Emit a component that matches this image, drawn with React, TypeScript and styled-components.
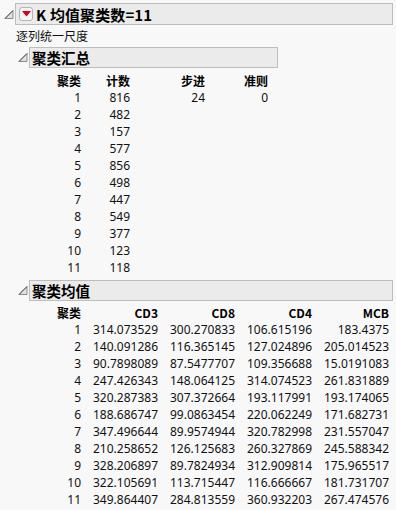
import React from "react";
import styled, { createGlobalStyle } from "styled-components";

const GlobalStyle = createGlobalStyle`
  html, body {
    margin: 0;
    padding: 0;
    background: #f8f8f8;
  }
  body {
    font-family: "Noto Sans", "Noto Sans CJK SC", sans-serif;
    font-size: 12px;
    color: #111;
  }
`;

const Page = styled.div`
  width: 396px;
  height: 510px;
  padding-top: 3px;
  box-sizing: border-box;
  overflow: hidden;
`;

const HeaderRow = styled.div`
  display: flex;
  align-items: stretch;
`;

const ToggleCell = styled.div<{ $w: number }>`
  width: ${(p) => p.$w}px;
  flex: none;
  display: flex;
  align-items: center;
  justify-content: flex-end;
  padding-right: 1px;
  box-sizing: border-box;
`;

const HeaderBox = styled.div<{ $big?: boolean; $w?: number }>`
  ${(p) => (p.$w ? `width: ${p.$w}px;` : "flex: 1;")}
  margin-right: ${(p) => (p.$w ? 0 : 3)}px;
  height: ${(p) => (p.$big ? 22 : 21)}px;
  box-sizing: border-box;
  border: 1px solid #bdbdbd;
  background: #ebebeb;
  display: flex;
  align-items: center;
  gap: 3px;
  padding-left: ${(p) => (p.$big ? 3 : 2)}px;
  font-family: "Noto Sans CJK SC", "Noto Sans", sans-serif;
  font-weight: 700;
  font-size: ${(p) => (p.$big ? 15 : 14.5)}px;
  color: #000;
  white-space: nowrap;
`;

const TitleText = styled.span`
  letter-spacing: 0.1px;
`;

const MenuButton = styled.span`
  width: 14px;
  height: 14px;
  box-sizing: border-box;
  border: 1px solid #b4b4b4;
  border-radius: 3px;
  background: #f4f4f4;
  display: inline-flex;
  align-items: center;
  justify-content: center;
  flex: none;
`;

const Content = styled.div<{ $indent: number }>`
  padding-left: ${(p) => p.$indent}px;
`;

const Note = styled.div`
  font-family: "Noto Sans CJK SC", sans-serif;
  font-size: 12px;
  height: 17px;
  line-height: 17px;
  margin-top: 2px;
  margin-bottom: 3px;
  color: #111;
`;

const Grid = styled.div<{ $cols: string; $top: number }>`
  display: grid;
  grid-template-columns: ${(p) => p.$cols};
  grid-auto-rows: 17px;
  margin: ${(p) => p.$top}px 0 4px 0;
`;

const Cell = styled.div<{ $head?: boolean }>`
  text-align: right;
  line-height: 17px;
  white-space: nowrap;
  font-weight: ${(p) => (p.$head ? 700 : 400)};
  font-family: ${(p) =>
    p.$head
      ? `"Noto Sans CJK SC", "Noto Sans", sans-serif`
      : `"Noto Sans", "Noto Sans CJK SC", sans-serif`};
  font-size: 12px;
  color: ${(p) => (p.$head ? "#000" : "#111")};
`;

const Disclosure = () => (
  <svg width="10" height="9" viewBox="0 0 10 9">
    <polygon points="9,0.5 9,8.5 1,8.5" fill="#e2e2e2" stroke="#8a8a8a" strokeWidth="1" />
    <line x1="9" y1="0.5" x2="1" y2="8.5" stroke="#555" strokeWidth="1" />
  </svg>
);

const RedTriangle = () => (
  <svg width="9" height="6" viewBox="0 0 9 6">
    <polygon points="0,0 9,0 4.5,5.5" fill="#d6001c" />
  </svg>
);

const summary: (string | number)[][] = [
  [1, 816, 24, 0],
  [2, 482, "", ""],
  [3, 157, "", ""],
  [4, 577, "", ""],
  [5, 856, "", ""],
  [6, 498, "", ""],
  [7, 447, "", ""],
  [8, 549, "", ""],
  [9, 377, "", ""],
  [10, 123, "", ""],
  [11, 118, "", ""],
];

const means: string[][] = [
  ["1", "314.073529", "300.270833", "106.615196", "183.4375"],
  ["2", "140.091286", "116.365145", "127.024896", "205.014523"],
  ["3", "90.7898089", "87.5477707", "109.356688", "15.0191083"],
  ["4", "247.426343", "148.064125", "314.074523", "261.831889"],
  ["5", "320.287383", "307.372664", "193.117991", "193.174065"],
  ["6", "188.686747", "99.0863454", "220.062249", "171.682731"],
  ["7", "347.496644", "89.9574944", "320.782998", "231.557047"],
  ["8", "210.258652", "126.125683", "260.327869", "245.588342"],
  ["9", "328.206897", "89.7824934", "312.909814", "175.965517"],
  ["10", "322.105691", "113.715447", "116.666667", "181.731707"],
  ["11", "349.864407", "284.813559", "360.932203", "267.474576"],
];

export default function App() {
  return (
    <>
      <GlobalStyle />
      <Page>
        <HeaderRow>
          <ToggleCell $w={15}>
            <Disclosure />
          </ToggleCell>
          <HeaderBox $big>
            <MenuButton>
              <RedTriangle />
            </MenuButton>
            <TitleText>K 均值聚类数=11</TitleText>
          </HeaderBox>
        </HeaderRow>
        <Content $indent={16}>
          <Note>逐列统一尺度</Note>
          <HeaderRow>
            <ToggleCell $w={13}>
              <Disclosure />
            </ToggleCell>
            <HeaderBox $w={249}>聚类汇总</HeaderBox>
          </HeaderRow>
          <Content $indent={13}>
            <Grid $cols="52px 49px 75px 63px" $top={4}>
              <Cell $head>聚类</Cell>
              <Cell $head>计数</Cell>
              <Cell $head>步进</Cell>
              <Cell $head>准则</Cell>
              {summary.map((r) =>
                r.map((v, i) => <Cell key={`${r[0]}-${i}`}>{v}</Cell>)
              )}
            </Grid>
          </Content>
          <HeaderRow>
            <ToggleCell $w={13}>
              <Disclosure />
            </ToggleCell>
            <HeaderBox>聚类均值</HeaderBox>
          </HeaderRow>
          <Content $indent={13}>
            <Grid $cols="52px 77px 77px 77px 77px" $top={3}>
              <Cell $head>聚类</Cell>
              <Cell $head>CD3</Cell>
              <Cell $head>CD8</Cell>
              <Cell $head>CD4</Cell>
              <Cell $head>MCB</Cell>
              {means.map((r) =>
                r.map((v, i) => <Cell key={`${r[0]}-${i}`}>{v}</Cell>)
              )}
            </Grid>
          </Content>
        </Content>
      </Page>
    </>
  );
}
